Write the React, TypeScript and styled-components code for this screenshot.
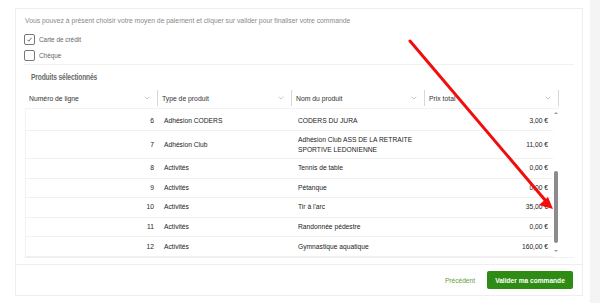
import React from 'react';
import styled, { createGlobalStyle } from 'styled-components';
import { ChevronDown } from 'lucide-react';

const GlobalStyle = createGlobalStyle`
  html, body {
    margin: 0;
    padding: 0;
    background: #fff;
  }
  body {
    font-family: "Liberation Sans", Arial, sans-serif;
    color: #333;
  }
`;

const Page = styled.div`
  position: relative;
  display: flex;
  width: 600px;
  height: 303px;
  overflow: hidden;
`;

const Main = styled.div`
  flex: 1;
  padding: 8px 0 0 15px;
`;

const SideStrip = styled.div`
  width: 10px;
  background: #f4f4f4;
`;

const Card = styled.div`
  width: 566px;
  height: 286px;
  border: 1px solid #eeeeee;
  display: flex;
  flex-direction: column;
`;

const Intro = styled.div`
  padding: 7px 9px 0;
  font-size: 6.8px;
  line-height: 10px;
  color: #8a8a8a;
`;

const Choices = styled.div`
  display: flex;
  flex-direction: column;
  gap: 6px;
  padding: 8px 8px 0 8px;
`;

const Choice = styled.label`
  display: flex;
  align-items: center;
  gap: 4px;
  font-size: 6.4px;
  color: #666;
  height: 10px;
`;

const Box = styled.span<{ checked?: boolean }>`
  width: 9px;
  height: 9px;
  border: 1px solid #777;
  border-radius: 2px;
  display: flex;
  align-items: center;
  justify-content: center;
`;

const Panel = styled.div`
  margin: 4px 8px 0;
  border-top: 1px solid #f0f0f0;
  border-bottom: 1px solid #f0f0f0;
  display: flex;
  flex-direction: column;
`;

const PanelTitle = styled.div`
  padding: 7px 0 0 7px;
  height: 10px;
  line-height: 10px;
  font-size: 9px;
  font-weight: bold;
  color: #6a6a6a;
  letter-spacing: -0.2px;
  span {
    display: inline-block;
    transform: scaleX(0.74);
    transform-origin: left center;
  }
`;

const Table = styled.div`
  margin: 6px 15px 0 1px;
`;

const HeaderRow = styled.div`
  display: grid;
  grid-template-columns: 133px 134px 133px 134px;
  height: 20px;
  border-bottom: 1px solid #f2f2f2;
`;

const HeaderCell = styled.div`
  display: flex;
  align-items: center;
  justify-content: space-between;
  padding: 0 6px 0 4px;
  font-size: 6.8px;
  color: #333;
  border-right: 1px solid #d8d8d8;
  margin: 2px 0;
`;

const Body = styled.div`
  display: flex;
  height: 148px;
  overflow: hidden;
`;

const Rows = styled.div`
  width: 527px;
  padding-top: 3px;
  border-left: 1px solid #f3f3f3;
`;

const Row = styled.div<{ size?: 'first' | 'tall' }>`
  display: grid;
  grid-template-columns: 133px 134px 133px 127px;
  height: ${(p) => (p.size === 'tall' ? 28 : p.size === 'first' ? 19 : 19.6)}px;
  border-bottom: 1px solid #f0f0f0;
  box-sizing: border-box;
  font-size: 6.7px;
  color: #222;
`;

const Cell = styled.div<{ align?: 'left' | 'right' }>`
  display: flex;
  align-items: center;
  justify-content: ${(p) => (p.align === 'right' ? 'flex-end' : 'flex-start')};
  padding: ${(p) => (p.align === 'right' ? '0 5px 0 0' : '0 0 0 5px')};
  line-height: 10px;
`;

const ScrollTrack = styled.div`
  width: 7px;
  display: flex;
  flex-direction: column;
  align-items: center;
  padding-top: 3px;
`;

const ScrollArrow = styled.div<{ down?: boolean }>`
  width: 0;
  height: 0;
  border-left: 2px solid transparent;
  border-right: 2px solid transparent;
  ${(p) => (p.down ? 'border-top: 2px solid #999;' : 'border-bottom: 2px solid #999;')}
`;

const ScrollThumb = styled.div`
  width: 4px;
  height: 72px;
  margin-top: 57px;
  margin-bottom: 7px;
  background: #8c8c8c;
  border-radius: 2px;
`;

const Footer = styled.div`
  margin-top: 6px;
  border-top: 1px solid #eeeeee;
  flex: 1;
  display: flex;
  align-items: center;
  justify-content: flex-end;
  gap: 12px;
  padding: 0 9px 0 0;
`;

const LinkButton = styled.span`
  font-size: 6.6px;
  color: #5f9e3c;
`;

const PrimaryButton = styled.button`
  width: 86px;
  height: 18px;
  border: none;
  border-radius: 2px;
  background: #2e8c14;
  color: #fff;
  font-family: "Liberation Sans", Arial, sans-serif;
  font-size: 6.6px;
  font-weight: bold;
  padding: 0;
`;

const Overlay = styled.svg`
  position: absolute;
  left: 0;
  top: 0;
  pointer-events: none;
`;

const headers = ['Numéro de ligne', 'Type de produit', 'Nom du produit', 'Prix total'];

const rows: { n: number; type: string; name: string; price: string; size?: 'first' | 'tall' }[] = [
  { n: 6, type: 'Adhésion CODERS', name: 'CODERS DU JURA', price: '3,00 €', size: 'first' },
  { n: 7, type: 'Adhésion Club', name: 'Adhésion Club ASS DE LA RETRAITE SPORTIVE LEDONIENNE', price: '11,00 €', size: 'tall' },
  { n: 8, type: 'Activités', name: 'Tennis de table', price: '0,00 €' },
  { n: 9, type: 'Activités', name: 'Pétanque', price: '0,00 €' },
  { n: 10, type: 'Activités', name: 'Tir à l\'arc', price: '35,00 €' },
  { n: 11, type: 'Activités', name: 'Randonnée pédestre', price: '0,00 €' },
  { n: 12, type: 'Activités', name: 'Gymnastique aquatique', price: '160,00 €' },
];

const App: React.FC = () => {
  return (
    <Page>
      <GlobalStyle />
      <Main>
        <Card>
          <Intro>
            Vous pouvez à présent choisir votre moyen de paiement et cliquer sur valider pour finaliser votre commande
          </Intro>
          <Choices>
            <Choice>
              <Box checked>
                <svg width="7" height="7" viewBox="0 0 7 7">
                  <path d="M1.5 3.8 L2.8 5.2 L5.5 1.8" fill="none" stroke="#444" strokeWidth="0.8" />
                </svg>
              </Box>
              Carte de crédit
            </Choice>
            <Choice>
              <Box />
              Chèque
            </Choice>
          </Choices>
          <Panel>
            <PanelTitle>
              <span>Produits sélectionnés</span>
            </PanelTitle>
            <Table>
              <HeaderRow>
                {headers.map((h) => (
                  <HeaderCell key={h}>
                    {h}
                    <ChevronDown size={8} strokeWidth={1.4} color="#888" />
                  </HeaderCell>
                ))}
              </HeaderRow>
              <Body>
                <Rows>
                  {rows.map((r) => (
                    <Row key={r.n} size={r.size}>
                      <Cell align="right">{r.n}</Cell>
                      <Cell>{r.type}</Cell>
                      <Cell>{r.name}</Cell>
                      <Cell align="right">{r.price}</Cell>
                    </Row>
                  ))}
                </Rows>
                <ScrollTrack>
                  <ScrollArrow />
                  <ScrollThumb />
                  <ScrollArrow down />
                </ScrollTrack>
              </Body>
            </Table>
          </Panel>
          <Footer>
            <LinkButton>Précédent</LinkButton>
            <PrimaryButton>Valider ma commande</PrimaryButton>
          </Footer>
        </Card>
      </Main>
      <SideStrip />
      <Overlay width="600" height="303" viewBox="0 0 600 303">
        <line x1="410" y1="41" x2="545" y2="200" stroke="#f20d0d" strokeWidth="3" strokeLinecap="round" />
        <polygon points="553,209 539,205 548,197" fill="#f20d0d" />
      </Overlay>
    </Page>
  );
};

export default App;
